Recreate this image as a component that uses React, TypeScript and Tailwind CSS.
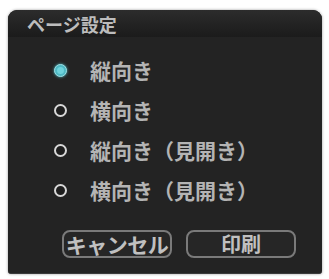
import React, { useState } from 'react';

const options = ['縦向き', '横向き', '縦向き（見開き）', '横向き（見開き）'];

const Radio = ({ checked }: { checked: boolean }) =>
  checked ? (
    <div className="flex h-[13px] w-[13px] items-center justify-center rounded-full border border-[#9fdde2] bg-[#4fb9c4] shadow-[0_0_3px_#4fb9c4]">
      <div className="h-[7px] w-[7px] rounded-full bg-[#6fd3dc]" />
    </div>
  ) : (
    <div className="h-[13px] w-[13px] rounded-full border-2 border-[#d8d8d8] bg-[#1e1e1e]" />
  );

const App = () => {
  const [selected, setSelected] = useState(0);

  return (
    <div className="h-[279px] w-[329px] bg-white px-[8px] pt-[10px] font-['Noto_Sans_CJK_JP',sans-serif]">
      <div className="flex h-[264px] w-[314px] flex-col rounded-t-[9px] rounded-b-[3px] border-b border-[#3a3a3a] bg-[#232323] shadow-[0_0_3px_rgba(0,0,0,0.4)]">
        <div className="flex h-[27px] items-center rounded-t-[9px] bg-gradient-to-b from-[#2c2c2c] to-[#1b1b1b] pl-[19px] text-[18px] font-bold leading-none text-[#bdbdbd]">
          ページ設定
        </div>
        <div className="flex flex-col pl-[46px] pt-[13px]">
          {options.map((label, i) => (
            <div
              key={label}
              className="flex h-[40px] cursor-pointer items-center gap-[23px]"
              onClick={() => setSelected(i)}
            >
              <Radio checked={selected === i} />
              <span className="text-[21px] font-bold leading-none text-[#b4b4b4]">{label}</span>
            </div>
          ))}
        </div>
        <div className="flex gap-[14px] pl-[54px] pt-[20px]">
          <button className="flex h-[28px] w-[110px] items-center justify-center rounded-[8px] border-2 border-[#7a7a7a] bg-[#262626] text-[21px] font-bold leading-none tracking-[-0.5px] text-[#c0c0c0]">
            キャンセル
          </button>
          <button className="flex h-[28px] w-[110px] items-center justify-center rounded-[8px] border-2 border-[#7a7a7a] bg-[#262626] text-[20px] font-bold leading-none text-[#c0c0c0]">
            印刷
          </button>
        </div>
      </div>
    </div>
  );
};

export default App;
